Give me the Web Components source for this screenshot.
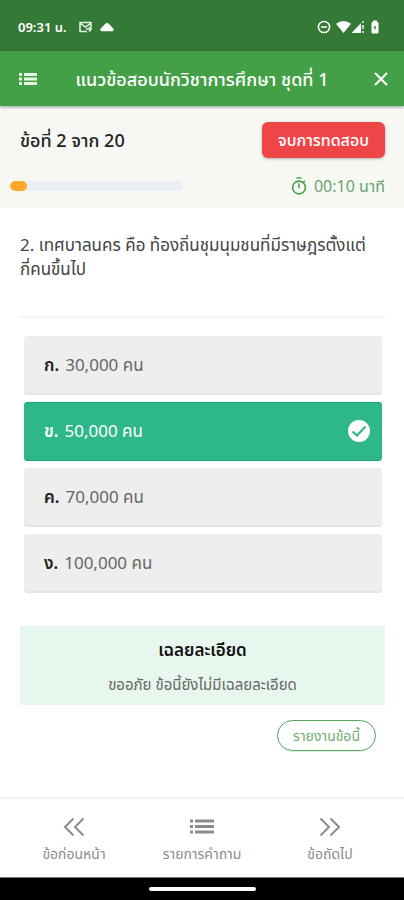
<!DOCTYPE html>
<html lang="th">
<head>
<meta charset="utf-8">
<meta name="viewport" content="width=device-width, initial-scale=1">
<title>แนวข้อสอบนักวิชาการศึกษา ชุดที่ 1</title>
<style>
html, body { margin: 0; }
body { background: #fff; color: #222; font-family: "Noto Sans", "Noto Sans Thai", "Open Sans", sans-serif; font-size: 16px; line-height: 24px; }
</style>
</head>
<body>
<quiz-app></quiz-app>
<script>
const define = (name, html) => customElements.define(name, class extends HTMLElement {
  constructor() {
    super();
    const t = document.createElement('template');
    t.innerHTML = '<style>*{box-sizing:border-box}button{font:inherit;border:0;background:none;padding:0;margin:0;color:inherit;cursor:pointer}svg{display:block;flex:none}</style>' + html;
    this.attachShadow({ mode: 'open' }).append(t.content.cloneNode(true));
  }
});

define('status-bar', `
<style>
:host{display:flex;align-items:center;height:51px;padding:2px 24px 0 18px;background:#347a36;color:#fff;font-size:13px;font-weight:600;line-height:20px}
.left,.right{display:flex;align-items:center}
.left{gap:8px}.right{gap:5px;margin-left:auto}
time{margin-right:4px;white-space:nowrap}
</style>
<div class="left"><time>09:31 น.</time>
<svg width="13" height="12" viewBox="0 0 13 12" fill="none" stroke="#e4f2e4" stroke-width="1.5"><path d="M8 10.5H1V1.5h11v5M1.5 2.5l5 3.5 5-3.5M7 8h4M10 6l2.5 2.2L10 10.5"/></svg>
<svg width="14" height="10" viewBox="0 0 14 10" fill="#fff"><path d="M2 9.200Q-1 9 .8 6.500L5 2Q7 0 9 2l4.200 4.500q1.600 2.500-1.200 2.700z"/></svg></div>
<div class="right">
<svg width="14" height="14" viewBox="0 0 14 14" fill="none" stroke="#fff" stroke-width="1.5"><circle cx="7" cy="7" r="5.6"/><path d="M4 7h6"/></svg>
<svg width="29" height="14" viewBox="0 0 29 14" fill="#fff"><path d="M0 3.800Q7.500-2 15 3.800L7.500 13z"/><path d="M15.500 13 25 3v10z"/><path d="M26 1h2v2h-2zM26 5h2v4h-2zM26 11h2v2h-2z" opacity=".7"/></svg>
<svg width="10" height="14" viewBox="0 0 10 14"><path fill="#fff" d="M3 .5h4V2h.5a1 1 0 0 1 1 1v9.500a1 1 0 0 1-1 1h-5a1 1 0 0 1-1-1V3a1 1 0 0 1 1-1H3z"/><path fill="#347a36" d="M5.400 5 3.500 8h1.200v2.500L6.500 7H5.400z"/></svg>
</div>`);

define('app-bar', `
<style>
:host{display:flex;align-items:center;height:55px;padding:0 15px 0 19px;background:#43a047;color:#fff;box-shadow:0 1px 3px rgba(0,0,0,.4);position:relative}
h1{flex:1;margin:0;padding-right:6px;text-align:center;font-size:18px;line-height:24px;font-weight:500;white-space:nowrap}
</style>
<button aria-label="เมนู"><svg width="18" height="12" viewBox="0 0 18 12" fill="#e6f5e6"><path d="M0 0h3v3H0zM5 0h13v3H5zM0 4.500h3v3H0zM5 4.500h13v3H5zM0 9h3v3H0zM5 9h13v3H5z"/></svg></button>
<h1><slot></slot></h1>
<button aria-label="ปิด"><svg width="16" height="16" viewBox="0 0 16 16" fill="none" stroke="#fff" stroke-width="2"><path d="M2 2l12 12M14 2 2 14"/></svg></button>`);

define('quiz-progress', `
<style>
:host{display:block;padding:16px 19px 10px 20px;background:#f7f8f3}
.row{display:flex;align-items:center;justify-content:space-between}
h2{margin:0;font-size:18px;line-height:24px;font-weight:500}
.finish{height:36px;padding:0 16px;border-radius:6px;background:#ee4648;color:#fff;font-weight:500;line-height:24px;box-shadow:0 1px 3px rgba(0,0,0,.3);white-space:nowrap}
.second{margin:16px 0 0 -10px;height:24px}
progress{appearance:none;display:block;width:46%;height:10px;border:0;border-radius:5px;overflow:hidden;background:#e9eff5}
progress::-webkit-progress-bar{background:#e9eff5;border-radius:5px}
progress::-webkit-progress-value{background:#ffa726;border-radius:5px}
.time{display:flex;align-items:center;gap:7px;color:#6ba36e;white-space:nowrap}
</style>
<div class="row"><h2>ข้อที่ 2 จาก 20</h2><button class="finish">จบการทดสอบ</button></div>
<div class="row second"><progress value="2" max="20" aria-label="ความคืบหน้า"></progress>
<div class="time"><svg width="16" height="18" viewBox="0 0 16 18" fill="none" stroke="#43a047" stroke-width="1.600"><circle cx="8" cy="10.500" r="6.400"/><path d="M5.500 1h5M8 6.500v4.500M12.300 5.500l1.500-1.500"/></svg><span>00:10 นาที</span></div></div>`);

define('quiz-question', `
<style>
:host{display:block;margin:0 19px 0 20px;padding:25px 0 35px;border-bottom:2px solid #f4f4f4;color:#444;font-size:17px}
p{margin:0}
::slotted(span){white-space:nowrap}
</style><p><slot></slot></p>`);

define('answer-list', `
<style>
:host{display:block;padding:18px 22px 0 24px;font-size:17px}
fieldset{display:grid;gap:7px;margin:0;padding:0;border:0;min-width:0}
label{display:flex;align-items:center;height:59px;padding:0 12px 2px 20px;border-radius:4px;background:#eee;color:#666;box-shadow:inset 0 -2px #e5e5e5;cursor:pointer}
b{font-weight:600;color:#222;margin-right:6px}
input{appearance:none;width:22px;height:22px;margin:0 0 0 auto;border-radius:50%}
svg{display:none;margin-left:-22px;pointer-events:none}
label:has(:checked){background:#2eb788;color:#fff;box-shadow:inset 0 -1px #1ba878,inset 0 1px #1ba878}
label:has(:checked) b{color:#fff}
input:checked + svg{display:block}
</style>
<fieldset aria-label="คำตอบ"></fieldset>`);

define('answer-explanation', `
<style>
:host{display:block;margin:33px 19px 0 20px;padding:12px 8px 9px;background:#e8f7ee;text-align:center;color:#666}
h2{margin:0 0 10px;color:#111;font-size:17px;line-height:24px;font-weight:600}
p{margin:0;font-size:15px;line-height:24px}
</style><h2>เฉลยละเอียด</h2><p><slot></slot></p>`);

define('report-button', `
<style>
:host{display:flex;justify-content:flex-end;padding:15px 28px 12px}
button{height:31px;padding:0 15px;border:1px solid #5ba45e;border-radius:16px;color:#6fae72;font-size:14px;line-height:20px;white-space:nowrap;box-shadow:0 1px 1px #e2eee2}
</style><button><slot></slot></button>`);

define('bottom-nav', `
<style>
:host{display:block;margin-top:auto;border-top:2px solid #f4f4f4;background:#fff;color:#8c8c8c}
nav{display:grid;grid-template-columns:repeat(3,1fr);height:78px;padding:16px 10px 0}
button{display:flex;flex-direction:column;align-items:center;gap:5px;font-size:14px;line-height:20px;white-space:nowrap}
</style>
<nav>
<button><svg width="24" height="24" viewBox="0 0 24 24" fill="none" stroke="currentColor" stroke-width="2"><path d="M11.500 3.500 3 12l8.500 8.500M21.500 3.500 13 12l8.500 8.500"/></svg>ข้อก่อนหน้า</button>
<button><svg width="24" height="24" viewBox="0 0 24 24" fill="currentColor"><path d="M0 4.500h3v3H0zM5 4.500h19v3H5zM0 10h3v3H0zM5 10h19v3H5zM0 15.500h3v3H0zM5 15.500h19v3H5z"/></svg>รายการคำถาม</button>
<button><svg width="24" height="24" viewBox="0 0 24 24" fill="none" stroke="currentColor" stroke-width="2"><path d="M2.500 3.500 11 12l-8.500 8.500M12.500 3.500 21 12l-8.500 8.500"/></svg>ข้อถัดไป</button>
</nav>`);

define('gesture-bar', `
<style>
:host{display:flex;justify-content:center;align-items:center;height:23px;background:#000;border-top:1px solid #777}
i{width:107px;height:4px;border-radius:2px;background:#fff}
</style><i></i>`);

define('quiz-app', `
<style>:host{display:flex;flex-direction:column;min-height:100vh}</style>
<status-bar></status-bar>
<app-bar>แนวข้อสอบนักวิชาการศึกษา ชุดที่ 1</app-bar>
<quiz-progress></quiz-progress>
<quiz-question>2. เทศบาลนคร คือ ท้องถิ่นชุมนุมชนที่มีราษฎรตั้งแต่<wbr><span>กี่คนขึ้นไป</span></quiz-question>
<answer-list></answer-list>
<answer-explanation>ขออภัย ข้อนี้ยังไม่มีเฉลยละเอียด</answer-explanation>
<report-button>รายงานข้อนี้</report-button>
<bottom-nav></bottom-nav>
<gesture-bar></gesture-bar>`);

const answers = [['ก.', '30,000 คน'], ['ข.', '50,000 คน'], ['ค.', '70,000 คน'], ['ง.', '100,000 คน']];
document.querySelector('quiz-app').shadowRoot.querySelector('answer-list').shadowRoot.querySelector('fieldset').innerHTML =
  answers.map(([k, v], i) => `<label><b>${k}</b><span>${v}</span><input type="radio" name="answer" value="${i}"${i === 1 ? ' checked' : ''}><svg width="22" height="22" viewBox="0 0 22 22"><circle cx="11" cy="11" r="11" fill="#fff"/><path d="M4.500 11.500 9 15.500 17.500 6.500" fill="none" stroke="#2eb788" stroke-width="2"/></svg></label>`).join('');
</script>
</body>
</html>
